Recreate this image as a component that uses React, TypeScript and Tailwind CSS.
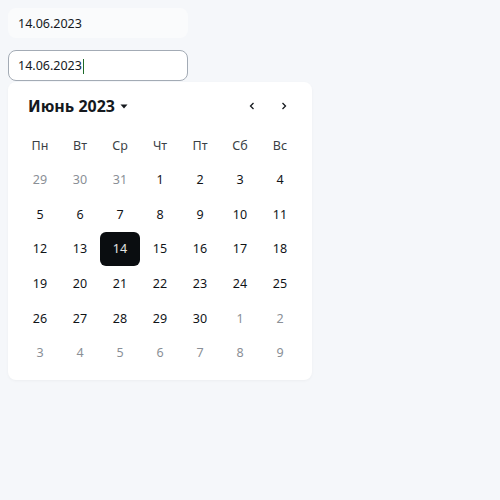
import React from 'react'

const weekDays = ['Пн', 'Вт', 'Ср', 'Чт', 'Пт', 'Сб', 'Вс']

const days: { d: number; muted?: boolean }[] = [
  { d: 29, muted: true },
  { d: 30, muted: true },
  { d: 31, muted: true },
  ...Array.from({ length: 30 }, (_, i) => ({ d: i + 1 })),
  ...Array.from({ length: 9 }, (_, i) => ({ d: i + 1, muted: true })),
]

function DayCell({ d, muted }: { d: number; muted?: boolean }) {
  const selected = !muted && d === 14
  return (
    <div className="flex h-[34.7px] items-center justify-center">
      <div
        className={
          selected
            ? 'flex h-[34px] w-10 items-center justify-center rounded-md bg-[#0a0d10] pt-[2px] text-[#e4e4e4]'
            : muted
              ? 'flex h-[34px] w-10 items-center justify-center pt-[2px] text-[#8a8f96]'
              : 'flex h-[34px] w-10 items-center justify-center pt-[2px] text-[#111418]'
        }
      >
        {d}
      </div>
    </div>
  )
}

export default function App() {
  return (
    <div
      className="min-h-[500px] w-[500px] bg-[#f5f7fa] p-2"
      style={{ fontFamily: '"Noto Sans", "Open Sans", sans-serif' }}
    >
      {/* Поле без фокуса */}
      <div className="flex h-[30px] w-[180px] items-center rounded-lg bg-[#fafbfc] px-[10px] pt-[2px] text-[12.5px] text-[#15191e]">
        14.06.2023
      </div>

      {/* Поле с фокусом */}
      <div className="mt-3 flex h-[31px] w-[180px] items-center rounded-lg border border-[#a3abb5] bg-white px-[9px] pt-[2px] text-[12.5px] text-[#15191e]">
        14.06.2023
        <span className="ml-px h-[15px] w-px bg-[#1d6b2a]" />
      </div>

      {/* Календарь */}
      <div className="mt-px w-[304px] rounded-lg bg-white px-3 pb-[10px] pt-[13px] shadow-[0_1px_3px_rgba(0,0,0,0.04)]">
        <div className="flex h-[22px] items-center justify-between pl-2">
          <div className="flex items-center gap-1 text-[16px] font-bold text-[#15191e]">
            Июнь 2023
            <svg width="10" height="10" viewBox="0 0 10 10">
              <path d="M1.5 3.5h7L5 7.5z" fill="#15191e" />
            </svg>
          </div>
          <div className="flex items-center gap-[20px] pr-[10px] text-[#15191e]">
            <svg width="12" height="12" viewBox="0 0 12 12" fill="none" stroke="currentColor" strokeWidth="1.3">
              <path d="M7.5 3L4.5 6l3 3" />
            </svg>
            <svg width="12" height="12" viewBox="0 0 12 12" fill="none" stroke="currentColor" strokeWidth="1.3">
              <path d="M4.5 3l3 3-3 3" />
            </svg>
          </div>
        </div>

        <div className="mt-[15px] grid grid-cols-7 text-[12.5px] text-[#3a3f45]">
          {weekDays.map((w) => (
            <div key={w} className="flex h-[28px] items-center justify-center">
              {w}
            </div>
          ))}
        </div>

        <div className="mt-[2px] grid grid-cols-7 text-[12.5px]">
          {days.map((c, i) => (
            <DayCell key={i} d={c.d} muted={c.muted} />
          ))}
        </div>
      </div>
    </div>
  )
}
